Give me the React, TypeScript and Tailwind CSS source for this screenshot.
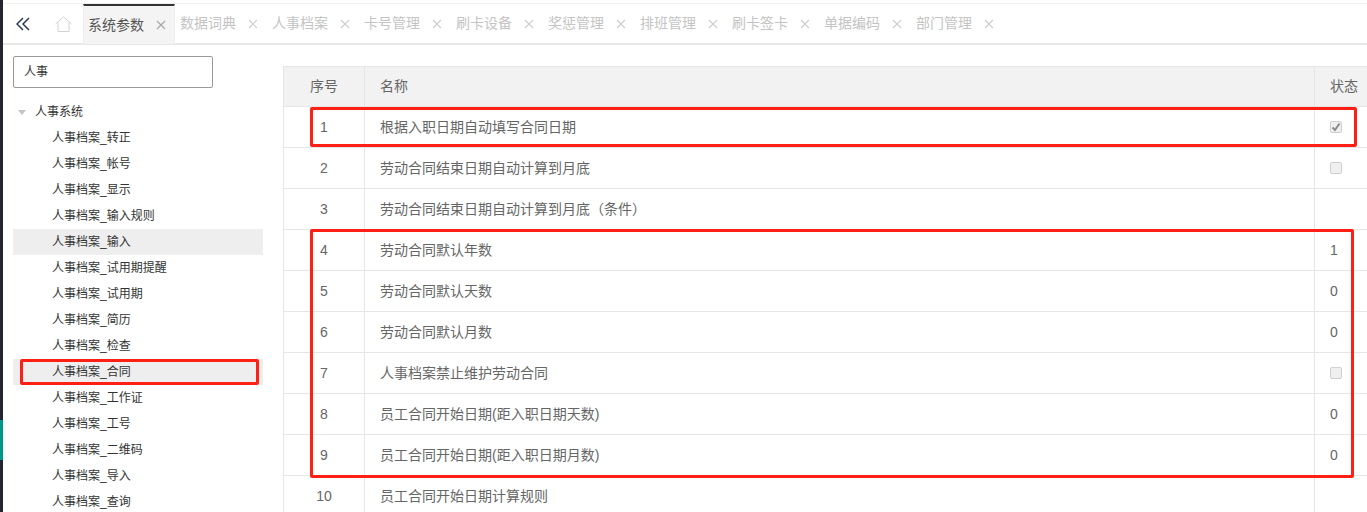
const FONT = "font-['Liberation_Sans','Noto_Sans_CJK_SC',sans-serif]";

const tabs = ["数据词典", "人事档案", "卡号管理", "刷卡设备", "奖惩管理", "排班管理", "刷卡签卡", "单据编码", "部门管理"];
const tree = ["转正", "帐号", "显示", "输入规则", "输入", "试用期提醒", "试用期", "简历", "检查", "合同", "工作证", "工号", "二维码", "导入", "查询"];

type Row = { n: number; name: string; v?: string; check?: "on" | "off" };
const rows: Row[] = [
  { n: 1, name: "根据入职日期自动填写合同日期", check: "on" },
  { n: 2, name: "劳动合同结束日期自动计算到月底", check: "off" },
  { n: 3, name: "劳动合同结束日期自动计算到月底（条件）" },
  { n: 4, name: "劳动合同默认年数", v: "1" },
  { n: 5, name: "劳动合同默认天数", v: "0" },
  { n: 6, name: "劳动合同默认月数", v: "0" },
  { n: 7, name: "人事档案禁止维护劳动合同", check: "off" },
  { n: 8, name: "员工合同开始日期(距入职日期天数)", v: "0" },
  { n: 9, name: "员工合同开始日期(距入职日期月数)", v: "0" },
  { n: 10, name: "员工合同开始日期计算规则" },
];

function Close({ color }: { color: string }) {
  return (
    <svg width="10" height="10" viewBox="0 0 10 10" className="shrink-0" fill="none" stroke={color} strokeWidth="1.2">
      <path d="M1 1 L9 9 M9 1 L1 9" />
    </svg>
  );
}

function Check({ on }: { on: boolean }) {
  return (
    <span className="flex h-[12px] w-[12px] items-center justify-center rounded-[2px] border border-[#cfcfcf] bg-[#efefef]">
      {on && (
        <svg width="10" height="10" viewBox="0 0 10 10" fill="none" stroke="#8a8a8a" strokeWidth="2">
          <path d="M1.5 5.5 L4 8 L8.5 1.5" />
        </svg>
      )}
    </span>
  );
}

export default function App() {
  return (
    <div className={`${FONT} relative flex h-[512px] w-[1367px] overflow-hidden bg-white`}>
      <div className="flex w-[3px] shrink-0 flex-col bg-[#23262e]">
        <div className="mt-[420px] h-[40px] bg-[#009688]" />
      </div>
      <div className="flex min-w-0 flex-1 flex-col">
        <div className="h-[4px] shrink-0 border-b border-[#f0f0f0]" />
        <div className="flex h-[41px] shrink-0 items-stretch border-b-2 border-[#e8e8e8]">
          <div className="flex w-[42px] items-center pl-[13px]">
            <svg width="14" height="14" viewBox="0 0 14 14" fill="none" stroke="#2b3a55" strokeWidth="1.5">
              <path d="M7 1 L1 7 L7 13 M13 1 L7 7 L13 13" />
            </svg>
          </div>
          <div className="flex w-[38px] items-center pl-[10px]">
            <svg width="17" height="16" viewBox="0 0 17 16" fill="none" stroke="#d2d2d2" strokeWidth="1">
              <path d="M0.5 8 L8.5 0.8 L16.5 8 M3 6 V15.5 H14 V6" />
            </svg>
          </div>
          <div className="mb-[-1px] flex w-[92px] items-center border-t-[2px] border-x border-t-[#333333] border-x-[#eeeeee] bg-[#f4f4f4] pl-[4px] text-[14px] text-[#555555]">
            <span className="w-[56px]">系统参数</span>
            <span className="ml-[12px]"><Close color="#a8a8a8" /></span>
          </div>
          {tabs.map((t) => (
            <div key={t} className="flex w-[92px] items-center pl-[5px] text-[14px] text-[#c4c4c4]">
              <span className="w-[56px]">{t}</span>
              <span className="ml-[12px]"><Close color="#cfcfcf" /></span>
            </div>
          ))}
        </div>
        <div className="flex min-h-0 flex-1">
          <div className="w-[280px] shrink-0 pl-[10px] pt-[11px]">
            <div className="flex h-[32px] w-[200px] items-center rounded-[2px] border border-[#999999] pl-[10px] text-[12px] text-[#333333]">人事</div>
            <div className="mt-[11px] flex h-[26px] items-center pl-[5px] text-[12px] text-[#333333]">
              <span className="h-0 w-0 border-x-[4px] border-t-[5px] border-x-transparent border-t-[#c4c4c4]" />
              <span className="ml-[9px]">人事系统</span>
            </div>
            {tree.map((t) => (
              <div
                key={t}
                className={`flex h-[26px] w-[250px] items-center pl-[39px] text-[12px] text-[#333333] ${t === "输入" || t === "合同" ? "bg-[#eeeeee]" : ""}`}
              >
                人事档案_{t}
              </div>
            ))}
          </div>
          <div className="min-w-0 flex-1 pt-[21px]">
            <div className="flex h-[41px] border border-r-0 border-[#e6e6e6] bg-[#f2f2f2] text-[13px] text-[#666666]">
              <div className="flex w-[81px] items-center justify-center border-r border-[#e6e6e6] text-[14px]">序号</div>
              <div className="flex w-[950px] items-center border-r border-[#e6e6e6] pl-[15px] text-[14px]">名称</div>
              <div className="flex flex-1 items-center pl-[15px] text-[14px]">状态</div>
            </div>
            {rows.map((r) => (
              <div key={r.n} className="flex h-[41px] border-b border-l border-[#e6e6e6] text-[14px] text-[#666666]">
                <div className="flex w-[81px] items-center justify-center border-r border-[#e6e6e6]">{r.n}</div>
                <div className="flex w-[950px] items-center border-r border-[#e6e6e6] pl-[15px]">{r.name}</div>
                <div className="flex flex-1 items-center pl-[15px]">
                  {r.check ? <Check on={r.check === "on"} /> : r.v}
                </div>
              </div>
            ))}
          </div>
        </div>
      </div>
      <div className="absolute left-[20px] top-[359px] h-[26px] w-[239px] rounded-[2px] border-[3px] border-[#ff1f14]" />
      <div className="absolute left-[310px] top-[107px] h-[40px] w-[1047px] rounded-[2px] border-[3px] border-[#ff1f14]" />
      <div className="absolute left-[310px] top-[229px] h-[249px] w-[1044px] rounded-[2px] border-[3px] border-[#ff1f14]" />
    </div>
  );
}
